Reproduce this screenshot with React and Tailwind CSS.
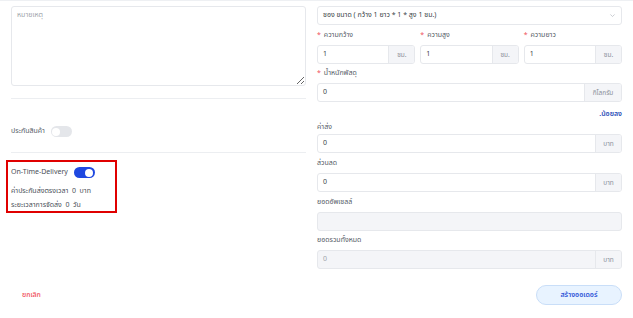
import React from 'react';

const font = { fontFamily: '"Noto Sans", "Noto Sans Thai", "Liberation Sans", sans-serif' };

function Label({ text, required, h = 19 }) {
    return (
        <div className="flex items-center text-[7px] text-[#555b66]" style={{ height: h }}>
            {required && <span className="text-[#f0505a] mr-[3px]">*</span>}
            {text}
        </div>
    );
}

function Input({ value, addon, disabled, addonW = 'w-[26px]' }) {
    return (
        <div className={`h-[19px] flex border border-[#e6e8ec] rounded-[3px] overflow-hidden ${disabled ? 'bg-[#f4f5f8]' : 'bg-white'}`}>
            <div className={`flex-1 flex items-center pl-[5px] text-[7px] ${disabled ? 'text-[#a0a4ab]' : 'text-[#3a3f47]'}`}>
                {value}
            </div>
            {addon && (
                <div className={`${addonW} flex items-center justify-center bg-[#f4f5f8] border-l border-[#e6e8ec] text-[6.5px] text-[#8a8f98]`}>
                    {addon}
                </div>
            )}
        </div>
    );
}

function Toggle({ on }) {
    return (
        <div className={`w-[21px] h-[11px] rounded-full p-[1.5px] flex ${on ? 'bg-[#1f48e0] justify-end' : 'bg-[#e4e6ea] justify-start'}`}>
            <div className="w-[8px] h-[8px] rounded-full bg-white" />
        </div>
    );
}

function App() {
    return (
        <div className="w-[633px] h-[318px] bg-white border-t border-[#eef0f3] overflow-hidden" style={font}>
            <div className="flex px-[11px] gap-[11px]">

                {/* Left column */}
                <div className="w-[295px] flex flex-col pt-[5px]">
                    <textarea
                        placeholder="หมายเหตุ"
                        className="h-[80px] w-full border border-[#e6e8ec] rounded-[3px] px-[5px] py-[3px] text-[7px] placeholder:text-[#a0a4ab] outline-none"
                    />
                    <div className="mt-[12px] border-t border-[#eceef1]" />
                    <div className="mt-[27px] h-[11px] flex items-center gap-[6px] text-[7px] text-[#555b66]">
                        ประกันสินค้า
                        <Toggle on={false} />
                    </div>
                    <div className="mt-[15px] border-t border-[#eceef1]" />

                    {/* On-Time-Delivery */}
                    <div className="mt-[7px] -ml-[5px] w-[111px] h-[53px] border-2 border-[#e00000] pl-[3px] pt-[5px] text-[7px] text-[#4a4f58]">
                        <div className="flex items-center gap-[6px] h-[11px]">
                            On-Time-Delivery
                            <Toggle on />
                        </div>
                        <div className="mt-[6px] leading-[14px]">
                            <div>ค่าประกันส่งตรงเวลา&nbsp; 0 &nbsp;บาท</div>
                            <div>ระยะเวลาการจัดส่ง&nbsp; 0 &nbsp;วัน</div>
                        </div>
                    </div>
                </div>

                {/* Right column */}
                <div className="w-[305px] flex flex-col pt-[5px]">
                    <div className="h-[19px] flex items-center justify-between border border-[#e6e8ec] rounded-[3px] px-[5px] text-[7px] text-[#3a3f47]">
                        ซอง ขนาด ( กว้าง 1 ยาว * 1 * สูง 1 ซม.)
                        <svg width="7" height="7" viewBox="0 0 10 10" fill="none" stroke="#b5b9c0" strokeWidth="1">
                            <path d="M2 3.5 L5 6.5 L8 3.5" />
                        </svg>
                    </div>

                    <div className="grid grid-cols-3 gap-x-[5px]">
                        <div>
                            <Label text="ความกว้าง" required h={20} />
                            <Input value="1" addon="ซม." />
                        </div>
                        <div>
                            <Label text="ความสูง" required h={20} />
                            <Input value="1" addon="ซม." />
                        </div>
                        <div>
                            <Label text="ความยาว" required h={20} />
                            <Input value="1" addon="ซม." />
                        </div>
                    </div>

                    <Label text="น้ำหนักพัสดุ" required h={19} />
                    <Input value="0" addon="กิโลกรัม" addonW="w-[37px]" />

                    <div className="mt-[6px] h-[12px] flex items-center justify-end text-[7px] font-semibold text-[#2a4fb8]">
                        .น้อยลง
                    </div>
                    <Label text="ค่าส่ง" h={14} />
                    <Input value="0" addon="บาท" />

                    <Label text="ส่วนลด" h={20} />
                    <Input value="0" addon="บาท" />

                    <Label text="ยอดอัพเซลล์" h={20} />
                    <Input value="" disabled />

                    <Label text="ยอดรวมทั้งหมด" h={19} />
                    <Input value="0" addon="บาท" disabled />
                </div>
            </div>

            {/* Footer */}
            <div className="flex items-center justify-between pl-[22px] pr-[11px] mt-[16px]">
                <span className="text-[7px] text-[#f0505a] font-medium">ยกเลิก</span>
                <button className="w-[86px] h-[20px] rounded-full bg-[#e8f3ff] border border-[#c9def8] text-[7px] font-semibold text-[#3056d8]">
                    สร้างออเดอร์
                </button>
            </div>
        </div>
    );
}

export default App;
